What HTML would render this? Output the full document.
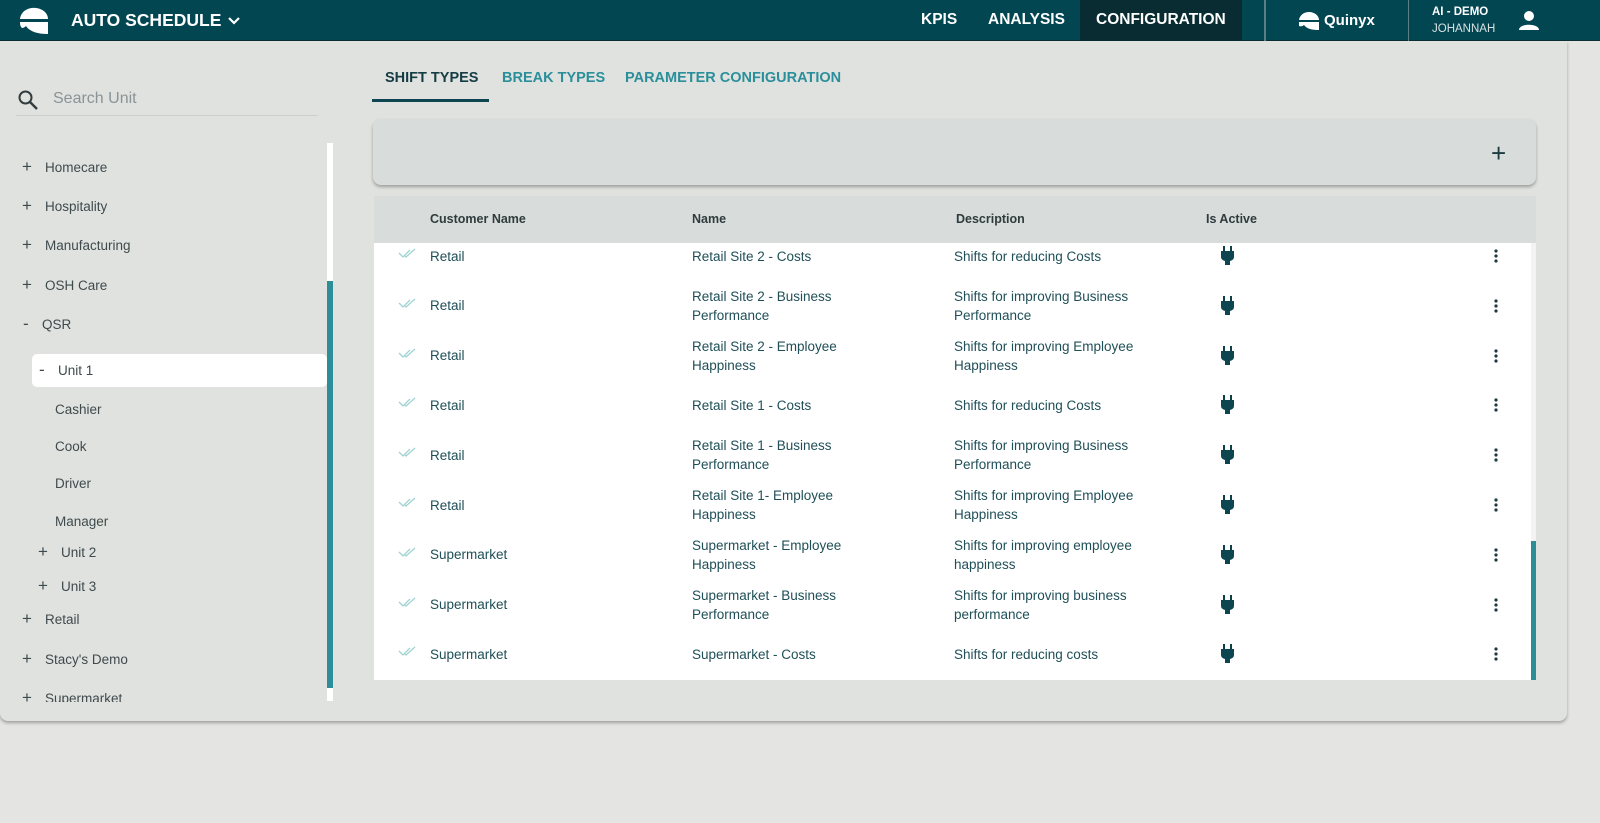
<!DOCTYPE html>
<html><head><meta charset="utf-8"><style>
*{margin:0;padding:0;box-sizing:border-box}
body{width:1600px;height:823px;background:#e4e4e3;font-family:"Liberation Sans",sans-serif;position:relative;overflow:hidden}
.hdr{position:absolute;left:0;top:0;width:1600px;height:41px;background:#024651;border-bottom:1px solid #0a2f35}
.a{position:absolute;white-space:nowrap}
.nav{color:#fff;font-weight:bold;font-size:15.5px;top:11px}
.main{position:absolute;left:0;top:41px;width:1567px;height:680px;background:#e0e2df;border-radius:0 0 8px 8px;box-shadow:0 2px 3px rgba(0,0,0,.3)}
.side{font-size:13.5px;color:#3f4a4d}
.plus{font-size:17px;color:#3f4a4d}
.cell{font-size:13.5px;color:#1f4f57;line-height:19px}
.th{font-size:12.5px;font-weight:bold;color:#2f3b3d;top:212px}
</style></head><body>
<div class="hdr">
 <svg class="a" style="left:18px;top:6px" width="32" height="30" viewBox="0 0 32 30"><path d="M2 13 C3 4 12 1 18 2 C26 3 30 8 30 13 Z" fill="#fff"/><path d="M2 16 L30 16 L30 28 C20 28 12 26 8 20 Q6 22 4 22 C2 20 2 18 2 16Z" fill="#fff"/><rect x="2" y="13.5" width="28" height="2" fill="#024651"/></svg>
 <div class="a nav" style="left:71px;font-size:17.5px;top:10px">AUTO SCHEDULE</div>
 <svg class="a" style="left:227px;top:16px" width="14" height="10" viewBox="0 0 14 10"><path d="M2 2 L7 7 L12 2" stroke="#fff" stroke-width="2.2" fill="none"/></svg>
 <div class="a nav" style="left:921px">KPIS</div>
 <div class="a nav" style="left:988px">ANALYSIS</div>
 <div class="a" style="left:1080px;top:0;width:162px;height:41px;background:#082c32"></div>
 <div class="a nav" style="left:1096px">CONFIGURATION</div>
 <div class="a" style="left:1264px;top:0;width:2px;height:41px;background:#5c7f85"></div>
 <div class="a" style="left:1408px;top:0;width:1px;height:41px;background:#5c7f85"></div>
 <svg class="a" style="left:1298px;top:11px" width="22" height="20" viewBox="0 0 22 20"><path d="M1 9 C2 3 7 1 11 1 C17 1 21 5 21 9 Z" fill="#fff"/><path d="M1 11 L21 11 L21 19 C14 19 9 18 6 14 Q4 16 1 15Z" fill="#fff"/></svg>
 <div class="a" style="left:1324px;top:12px;color:#fff;font-weight:bold;font-size:15px">Quinyx</div>
 <div class="a" style="left:1432px;top:6px;color:#fff;font-size:11.5px;font-weight:bold">AI - DEMO</div>
 <div class="a" style="left:1432px;top:23px;color:#d8e2e3;font-size:11.5px">JOHANNAH</div>
 <svg class="a" style="left:1518px;top:10px" width="22" height="22" viewBox="0 0 22 22"><circle cx="11" cy="6" r="5" fill="#fff"/><path d="M1 20 C1 13 21 13 21 20Z" fill="#fff"/></svg>
</div>
<div class="main"></div>
<svg class="a" style="left:17px;top:89px" width="22" height="22" viewBox="0 0 22 22"><circle cx="8.5" cy="8.5" r="6" stroke="#333c3e" stroke-width="2" fill="none"/><path d="M13 13 L20 20" stroke="#333c3e" stroke-width="2.4"/></svg>
<div class="a" style="left:53px;top:90px;font-size:16px;color:#8a9396">Search Unit</div>
<div class="a" style="left:16px;top:115px;width:302px;height:1px;background:#c8d0d1"></div>
<div class="a" style="left:327px;top:143px;width:6px;height:558px;background:#fff"></div>
<div class="a" style="left:327px;top:281px;width:6px;height:407px;background:#2e8e98"></div>
<div class="a" style="left:32px;top:354px;width:295px;height:33px;background:#fff;border-radius:5px"></div>
<div class="a plus" style="left:22px;top:157px">+</div><div class="a side" style="left:45px;top:160px">Homecare</div>
<div class="a plus" style="left:22px;top:196px">+</div><div class="a side" style="left:45px;top:199px">Hospitality</div>
<div class="a plus" style="left:22px;top:235px">+</div><div class="a side" style="left:45px;top:238px">Manufacturing</div>
<div class="a plus" style="left:22px;top:275px">+</div><div class="a side" style="left:45px;top:278px">OSH Care</div>
<div class="a plus" style="left:23px;top:314px">-</div><div class="a side" style="left:42px;top:317px">QSR</div>
<div class="a plus" style="left:39px;top:360px">-</div><div class="a side" style="left:58px;top:363px">Unit 1</div>
<div class="a side" style="left:55px;top:402px">Cashier</div>
<div class="a side" style="left:55px;top:439px">Cook</div>
<div class="a side" style="left:55px;top:476px">Driver</div>
<div class="a side" style="left:55px;top:514px">Manager</div>
<div class="a plus" style="left:38px;top:542px">+</div><div class="a side" style="left:61px;top:545px">Unit 2</div>
<div class="a plus" style="left:38px;top:576px">+</div><div class="a side" style="left:61px;top:579px">Unit 3</div>
<div class="a plus" style="left:22px;top:609px">+</div><div class="a side" style="left:45px;top:612px">Retail</div>
<div class="a plus" style="left:22px;top:649px">+</div><div class="a side" style="left:45px;top:652px">Stacy's Demo</div>
<div class="a" style="left:0;top:688px;width:325px;height:14px;overflow:hidden"><div class="a plus" style="left:22px;top:0px">+</div><div class="a side" style="left:45px;top:3px">Supermarket</div></div>
<div class="a" style="left:385px;top:70px;font-size:14.5px;font-weight:bold;color:#143c43">SHIFT TYPES</div>
<div class="a" style="left:502px;top:70px;font-size:14.5px;font-weight:bold;color:#2a8f9a">BREAK TYPES</div>
<div class="a" style="left:625px;top:70px;font-size:14.5px;font-weight:bold;color:#2a8f9a">PARAMETER CONFIGURATION</div>
<div class="a" style="left:372px;top:99px;width:117px;height:3px;background:#0d4650"></div>
<div class="a" style="left:373px;top:119px;width:1163px;height:66px;background:#d8dcdb;border-radius:8px;box-shadow:0 2px 3px rgba(0,0,0,.3)"></div>
<div class="a" style="left:1491px;top:138px;font-size:26px;color:#1c3a40;font-weight:300">+</div>
<div class="a" style="left:374px;top:196px;width:1162px;height:47px;background:#d8dcdb"></div>
<div class="a" style="left:374px;top:243px;width:1162px;height:437px;background:#fff"></div>
<div class="a" style="left:1531px;top:243px;width:5px;height:437px;background:#f3f3f3"></div>
<div class="a" style="left:1531px;top:541px;width:5px;height:139px;background:#2e8e98"></div>
<div class="a th" style="left:430px">Customer Name</div>
<div class="a th" style="left:692px">Name</div>
<div class="a th" style="left:956px">Description</div>
<div class="a th" style="left:1206px">Is Active</div>
<div id="rows"></div>
<script>
var R=[["Retail","Retail Site 2 - Costs","Shifts for reducing Costs"],
["Retail","Retail Site 2 - Business<br>Performance","Shifts for improving Business<br>Performance"],
["Retail","Retail Site 2 - Employee<br>Happiness","Shifts for improving Employee<br>Happiness"],
["Retail","Retail Site 1 - Costs","Shifts for reducing Costs"],
["Retail","Retail Site 1 - Business<br>Performance","Shifts for improving Business<br>Performance"],
["Retail","Retail Site 1- Employee<br>Happiness","Shifts for improving Employee<br>Happiness"],
["Supermarket","Supermarket - Employee<br>Happiness","Shifts for improving employee<br>happiness"],
["Supermarket","Supermarket - Business<br>Performance","Shifts for improving business<br>performance"],
["Supermarket","Supermarket - Costs","Shifts for reducing costs"]];
var h="";
R.forEach(function(r,i){var c=256+i*49.8;
function t(x,s){var two=s.indexOf("<br>")>=0;return '<div class="a cell" style="left:'+x+'px;top:'+(c-(two?19:9.5))+'px">'+s+'</div>';}
h+='<svg class="a" style="left:398px;top:'+(c-8)+'px" width="20" height="12" viewBox="0 0 20 12"><path d="M1 5 L5 9 L12 2 M7 8 L8 9 L17 1" stroke="#9fd4d2" stroke-width="1.3" fill="none"/></svg>';
h+=t(430,r[0])+t(692,r[1])+t(954,r[2]);
h+='<svg class="a" style="left:1220px;top:'+(c-10)+'px" width="16" height="20" viewBox="0 0 16 20"><rect x="3" y="0" width="2" height="5" fill="#0d3f47"/><rect x="10" y="0" width="2" height="5" fill="#0d3f47"/><path d="M1 5 H14 V11 Q14 14 10 15 V19 H5 V15 Q1 14 1 11Z" fill="#0d4650"/></svg>';
h+='<svg class="a" style="left:1494px;top:'+(c-7)+'px" width="4" height="14" viewBox="0 0 4 14"><circle cx="2" cy="2" r="1.6" fill="#1c3a40"/><circle cx="2" cy="7" r="1.6" fill="#1c3a40"/><circle cx="2" cy="12" r="1.6" fill="#1c3a40"/></svg>';
});
document.getElementById("rows").innerHTML=h;
</script>
</body></html>
